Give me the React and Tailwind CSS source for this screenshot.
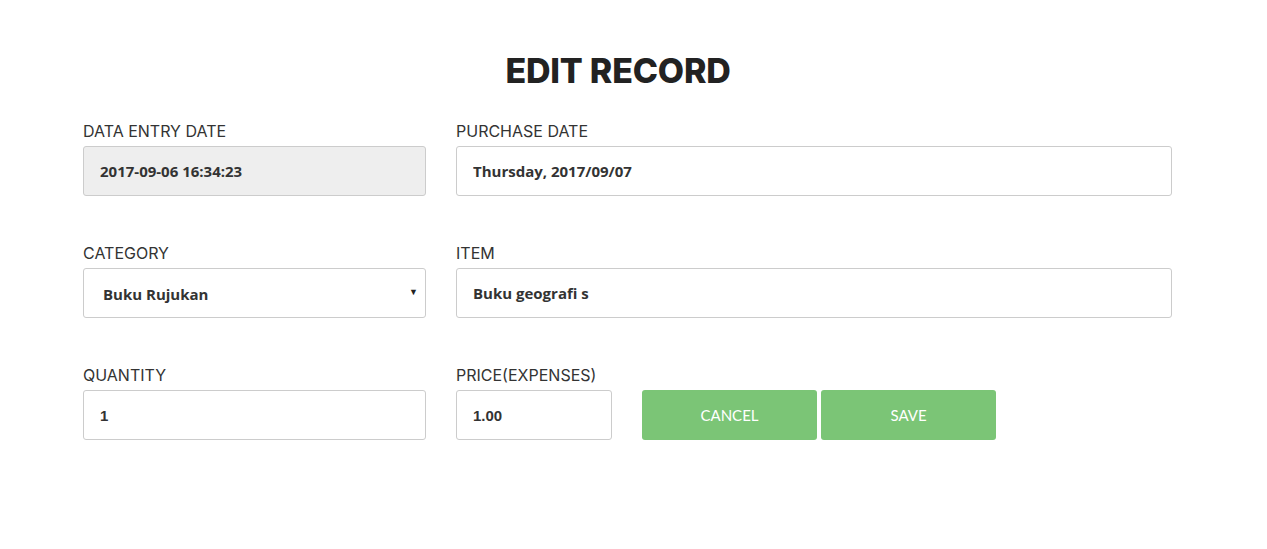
import React, { useState } from 'react';

const labelFont = { fontFamily: 'Inter, "Open Sans", sans-serif' };
const valueFont = { fontFamily: '"Open Sans", "Liberation Sans", sans-serif' };
const arialFont = { fontFamily: '"Liberation Sans", Arial, sans-serif' };

const Field = ({ label, className, children }) => (
  <div className={className}>
    <label className="block text-[16px] leading-5 mb-[5px] text-[#333]" style={labelFont}>
      {label}
    </label>
    {children}
  </div>
);

const inputCls =
  'w-full h-[50px] border border-[#ccc] rounded-[3px] px-[16px] text-[15px] font-bold text-[#333] outline-none';

const App = () => {
  const [purchaseDate, setPurchaseDate] = useState('Thursday, 2017/09/07');
  const [category, setCategory] = useState('Buku Rujukan');
  const [item, setItem] = useState('Buku geografi s');
  const [quantity, setQuantity] = useState('1');
  const [price, setPrice] = useState('1.00');

  return (
    <div className="w-[1267px] min-h-[549px] bg-white pt-[51px]">
      <h1
        className="w-[1236px] text-center text-[34px] leading-10 font-extrabold text-[#222] tracking-[-0.2px]"
        style={labelFont}
      >
        EDIT RECORD
      </h1>

      <div className="ml-[83px] mt-[30px] flex flex-col gap-[47px]">
        <div className="flex gap-[30px]">
          <Field label="DATA ENTRY DATE" className="w-[343px]">
            <input
              className={`${inputCls} bg-[#eee]`}
              style={valueFont}
              value="2017-09-06 16:34:23"
              disabled
              readOnly
            />
          </Field>
          <Field label="PURCHASE DATE" className="w-[716px]">
            <input
              className={`${inputCls} bg-white`}
              style={valueFont}
              value={purchaseDate}
              onChange={(e) => setPurchaseDate(e.target.value)}
            />
          </Field>
        </div>

        <div className="flex gap-[30px]">
          <Field label="CATEGORY" className="w-[343px]">
            <div className="relative">
              <select
                className={`${inputCls} appearance-none bg-white pl-[19px] pt-[3px]`}
                style={valueFont}
                value={category}
                onChange={(e) => setCategory(e.target.value)}
              >
                <option>Buku Rujukan</option>
                <option>Alat Tulis</option>
                <option>Lain-lain</option>
              </select>
              <span className="pointer-events-none absolute right-[8px] top-[17px] text-[9px] text-[#222]">▼</span>
            </div>
          </Field>
          <Field label="ITEM" className="w-[716px]">
            <input
              className={`${inputCls} bg-white`}
              style={valueFont}
              value={item}
              onChange={(e) => setItem(e.target.value)}
            />
          </Field>
        </div>

        <div className="flex gap-[30px] items-end">
          <Field label="QUANTITY" className="w-[343px]">
            <input
              className={`${inputCls} bg-white`}
              style={arialFont}
              value={quantity}
              onChange={(e) => setQuantity(e.target.value)}
            />
          </Field>
          <div className="flex items-end">
            <Field label="PRICE(EXPENSES)" className="w-[156px]">
              <input
                className={`${inputCls} bg-white`}
                style={arialFont}
                value={price}
                onChange={(e) => setPrice(e.target.value)}
              />
            </Field>
            <div className="flex gap-[4px] ml-[30px]">
              <button
                className="w-[175px] h-[50px] rounded-[3px] bg-[#7bc576] text-white text-[15px] hover:bg-[#6cb867]"
                style={{ fontFamily: 'Lato, sans-serif' }}
              >
                CANCEL
              </button>
              <button
                className="w-[175px] h-[50px] rounded-[3px] bg-[#7bc576] text-white text-[15px] hover:bg-[#6cb867]"
                style={{ fontFamily: 'Lato, sans-serif' }}
              >
                SAVE
              </button>
            </div>
          </div>
        </div>
      </div>
    </div>
  );
};

export default App;
